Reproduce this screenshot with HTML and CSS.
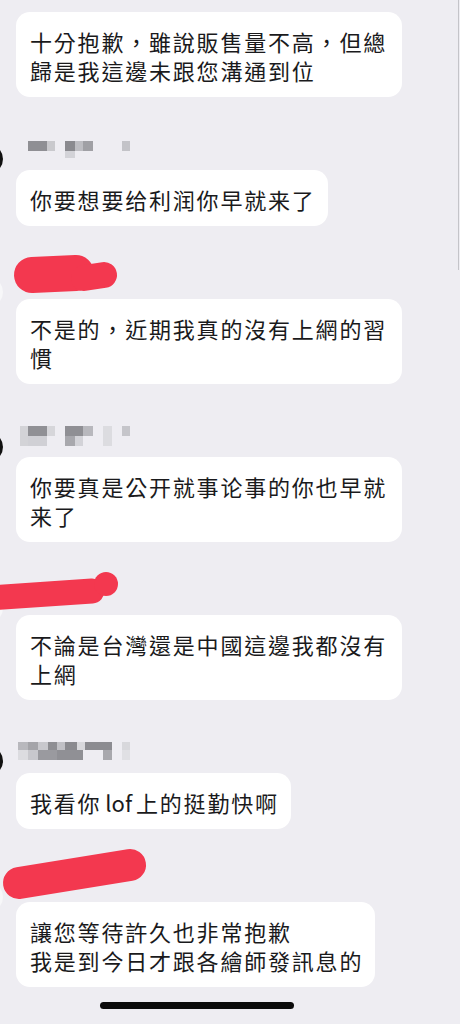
FILE: index.html
```html
<!DOCTYPE html>
<html lang="zh-Hant">
<head>
    <meta charset="UTF-8">
    <meta name="viewport" content="width=device-width, initial-scale=1.0">
    <title>聊天記錄</title>
    <link rel="stylesheet" href="styles.css">
</head>
<body>
    <div class="scrollbar"></div>

    <div class="chat">
        <div class="bubble">十分抱歉，雖說販售量不高，但總歸是我這邊未跟您溝通到位</div>

        <!-- 對方 (名字打了馬賽克) -->
        <div class="sender">
            <svg width="160" height="73" viewBox="0 0 160 73">
                <circle cx="-12" cy="62" r="15" fill="#111"/>
                <rect x="28" y="44" width="19" height="10" fill="#8f8f94"/>
                <rect x="47" y="44" width="8" height="10" fill="#c9c9cd"/>
                <rect x="65" y="44" width="10" height="10" fill="#8a8a8f"/>
                <rect x="75" y="44" width="8" height="10" fill="#bdbdc2"/>
                <rect x="83" y="44" width="10" height="10" fill="#a0a0a5"/>
                <rect x="122" y="44" width="8" height="10" fill="#c3c3c8"/>
                <rect x="65" y="54" width="10" height="7" fill="#d3d3d8"/>
            </svg>
        </div>
        <div class="bubble">你要想要给利润你早就来了</div>

        <!-- 自己 (名字塗紅) -->
        <div class="sender">
            <svg width="160" height="73" viewBox="0 0 160 73">
                <circle cx="-12" cy="66" r="15" fill="#f7f7f9"/>
                <path d="M32 49 L76 47" stroke="#f3384f" stroke-width="36" stroke-linecap="round"/>
                <path d="M84 52 L104 49" stroke="#f3384f" stroke-width="26" stroke-linecap="round"/>
            </svg>
        </div>
        <div class="bubble">不是的，近期我真的沒有上網的習慣</div>

        <div class="sender">
            <svg width="160" height="73" viewBox="0 0 160 73">
                <circle cx="-12" cy="63" r="15" fill="#111"/>
                <rect x="20" y="42" width="8" height="20" fill="#d3d3d7"/>
                <rect x="28" y="42" width="19" height="10" fill="#909095"/>
                <rect x="47" y="42" width="8" height="10" fill="#d6d6da"/>
                <rect x="65" y="42" width="18" height="10" fill="#8f8f94"/>
                <rect x="83" y="42" width="10" height="10" fill="#b8b8bd"/>
                <rect x="103" y="42" width="9" height="20" fill="#dcdce0"/>
                <rect x="122" y="42" width="8" height="10" fill="#c5c5ca"/>
                <rect x="28" y="52" width="19" height="10" fill="#d0d0d5"/>
                <rect x="65" y="52" width="10" height="10" fill="#a8a8ad"/>
                <rect x="75" y="52" width="8" height="10" fill="#d3d3d8"/>
            </svg>
        </div>
        <div class="bubble">你要真是公开就事论事的你也早就来了</div>

        <div class="sender">
            <svg width="160" height="73" viewBox="0 0 160 73">
                <circle cx="-12" cy="66" r="15" fill="#f7f7f9"/>
                <path d="M-10 56 L92 49" stroke="#f3384f" stroke-width="25" stroke-linecap="round"/>
                <circle cx="106" cy="42" r="12" fill="#f3384f"/>
            </svg>
        </div>
        <div class="bubble">不論是台灣還是中國這邊我都沒有上網</div>

        <div class="sender">
            <svg width="160" height="73" viewBox="0 0 160 73">
                <circle cx="-12" cy="61" r="15" fill="#111"/>
                <rect x="18" y="42" width="10" height="8" fill="#b8b8bd"/>
                <rect x="28" y="42" width="10" height="8" fill="#a4a4a9"/>
                <rect x="38" y="42" width="10" height="8" fill="#c8c8cd"/>
                <rect x="48" y="42" width="9" height="8" fill="#8e8e93"/>
                <rect x="57" y="42" width="8" height="8" fill="#c0c0c5"/>
                <rect x="65" y="42" width="12" height="8" fill="#8a8a8f"/>
                <rect x="77" y="42" width="8" height="8" fill="#d8d8dc"/>
                <rect x="85" y="42" width="27" height="8" fill="#8c8c91"/>
                <rect x="122" y="42" width="8" height="8" fill="#d8d8dc"/>
                <rect x="18" y="50" width="10" height="10" fill="#dcdce0"/>
                <rect x="28" y="50" width="10" height="10" fill="#c8c8cd"/>
                <rect x="38" y="50" width="19" height="10" fill="#9a9a9f"/>
                <rect x="57" y="50" width="26" height="10" fill="#909095"/>
                <rect x="103" y="50" width="9" height="10" fill="#a8a8ad"/>
                <rect x="122" y="50" width="8" height="10" fill="#e0e0e4"/>
            </svg>
        </div>
        <div class="bubble">我看你<span class="latin"> lof </span>上的挺勤快啊</div>

        <div class="sender">
            <svg width="160" height="73" viewBox="0 0 160 73">
                <circle cx="-12" cy="68" r="15" fill="#f7f7f9"/>
                <path d="M19 54 L130 36" stroke="#f3384f" stroke-width="32" stroke-linecap="round"/>
            </svg>
        </div>
        <div class="bubble">讓您等待許久也非常抱歉<br>我是到今日才跟各繪師發訊息的</div>

        <div class="home-bar"></div>
    </div>
</body>
</html>
```

FILE: styles.css
```css
body {
    margin: 0;
    background-color: #eeedf2;
    font-family: "Noto Sans CJK TC", "Noto Sans", sans-serif;
    color: #1a1a1c;
    overflow: hidden;
}
.chat {
    display: flex;
    flex-direction: column;
    align-items: flex-start;
    padding: 12px 0 0 16px;
}
.bubble {
    box-sizing: border-box;
    max-width: 386px;
    padding: 15px 12px 12px 14px;
    background-color: #fff;
    border-radius: 14px;
    font-size: 22px;
    line-height: 29px;
    letter-spacing: 1.8px;
}
.latin {
    letter-spacing: 0;
    word-spacing: -1px;
}
.sender {
    height: 73px;
    margin-left: -16px;
}
.sender svg {
    display: block;
    overflow: visible;
}
.home-bar {
    width: 194px;
    height: 7px;
    margin: 15px 0 0 84px;
    border-radius: 4px;
    background-color: #0b0b0b;
}
.scrollbar {
    position: absolute;
    top: 0;
    right: 1px;
    width: 1px;
    height: 270px;
    background-color: #c4c4c9;
}
```
